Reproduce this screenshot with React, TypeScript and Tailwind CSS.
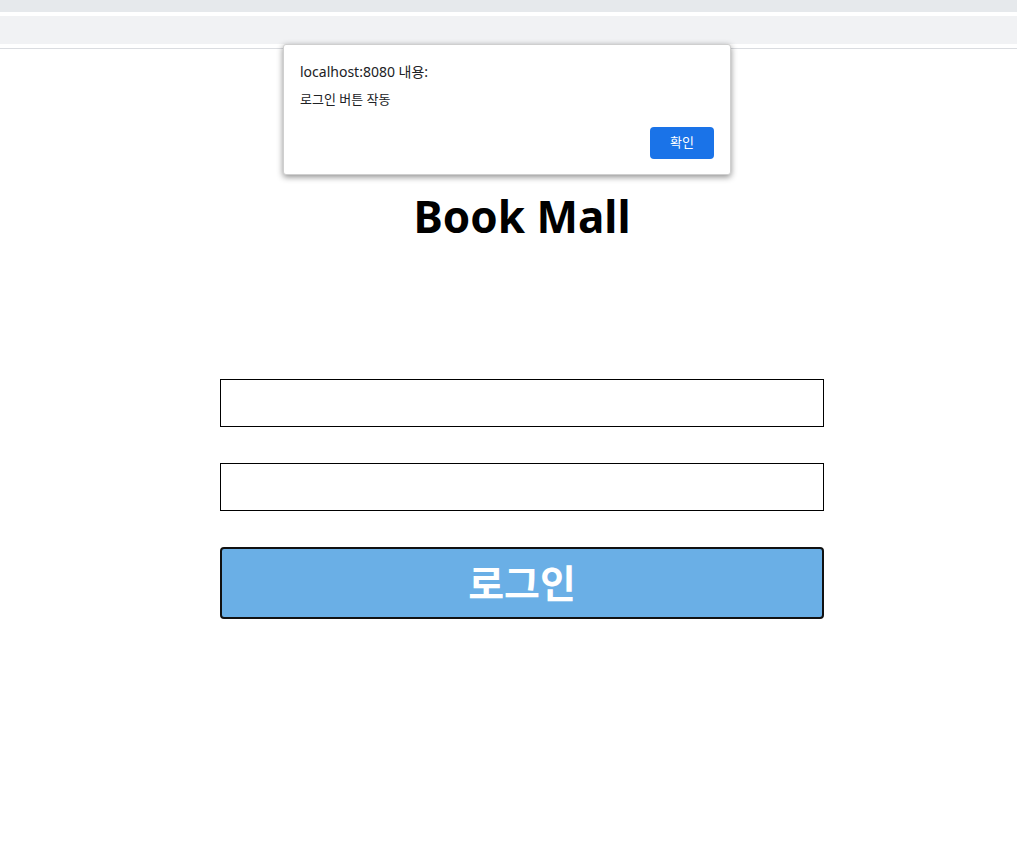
import React from "react";

const font = { fontFamily: '"Noto Sans", "Noto Sans CJK KR", sans-serif' };

function BrowserChrome() {
  return (
    <div>
      <div className="h-[12px] bg-[#e6e9ec]" />
      <div className="h-[4px] bg-white" />
      <div className="h-[28px] bg-[#f1f2f4]" />
      <div className="h-[4px] bg-white" />
      <div className="h-px bg-[#dadce0]" />
    </div>
  );
}

function AlertDialog() {
  return (
    <div className="absolute left-[283px] top-[44px] w-[448px] h-[131px] bg-white rounded-[3px] shadow-[0_2px_6px_rgba(0,0,0,0.45)] border border-[#cfcfcf] px-4 pt-[16px]">
      <p className="text-[14px] leading-[22px] text-[#202124]">localhost:8080 내용:</p>
      <p className="mt-[7px] text-[13px] leading-[18px] text-[#202124]">로그인 버튼 작동</p>
      <div className="flex justify-end mt-[19px]">
        <button className="w-[64px] h-[32px] rounded-[4px] bg-[#1a73e8] text-white text-[13px]">
          확인
        </button>
      </div>
    </div>
  );
}

export default function App() {
  return (
    <div className="relative min-h-[841px] bg-white text-black" style={font}>
      <BrowserChrome />
      <AlertDialog />
      <main className="pt-[137px]">
        <h1 className="ml-[220px] w-[604px] text-center text-[44px] leading-[60px] font-bold">
          Book Mall
        </h1>
        <div className="ml-[220px] w-[604px] mt-[133px] flex flex-col gap-[36px]">
          <input className="h-[48px] border border-black outline-none px-2" />
          <input type="password" className="h-[48px] border border-black outline-none px-2" />
          <button className="h-[72px] rounded-[4px] border-2 border-[#111] bg-[#6aafe6] text-white text-[39px] font-bold">
            로그인
          </button>
        </div>
      </main>
    </div>
  );
}
